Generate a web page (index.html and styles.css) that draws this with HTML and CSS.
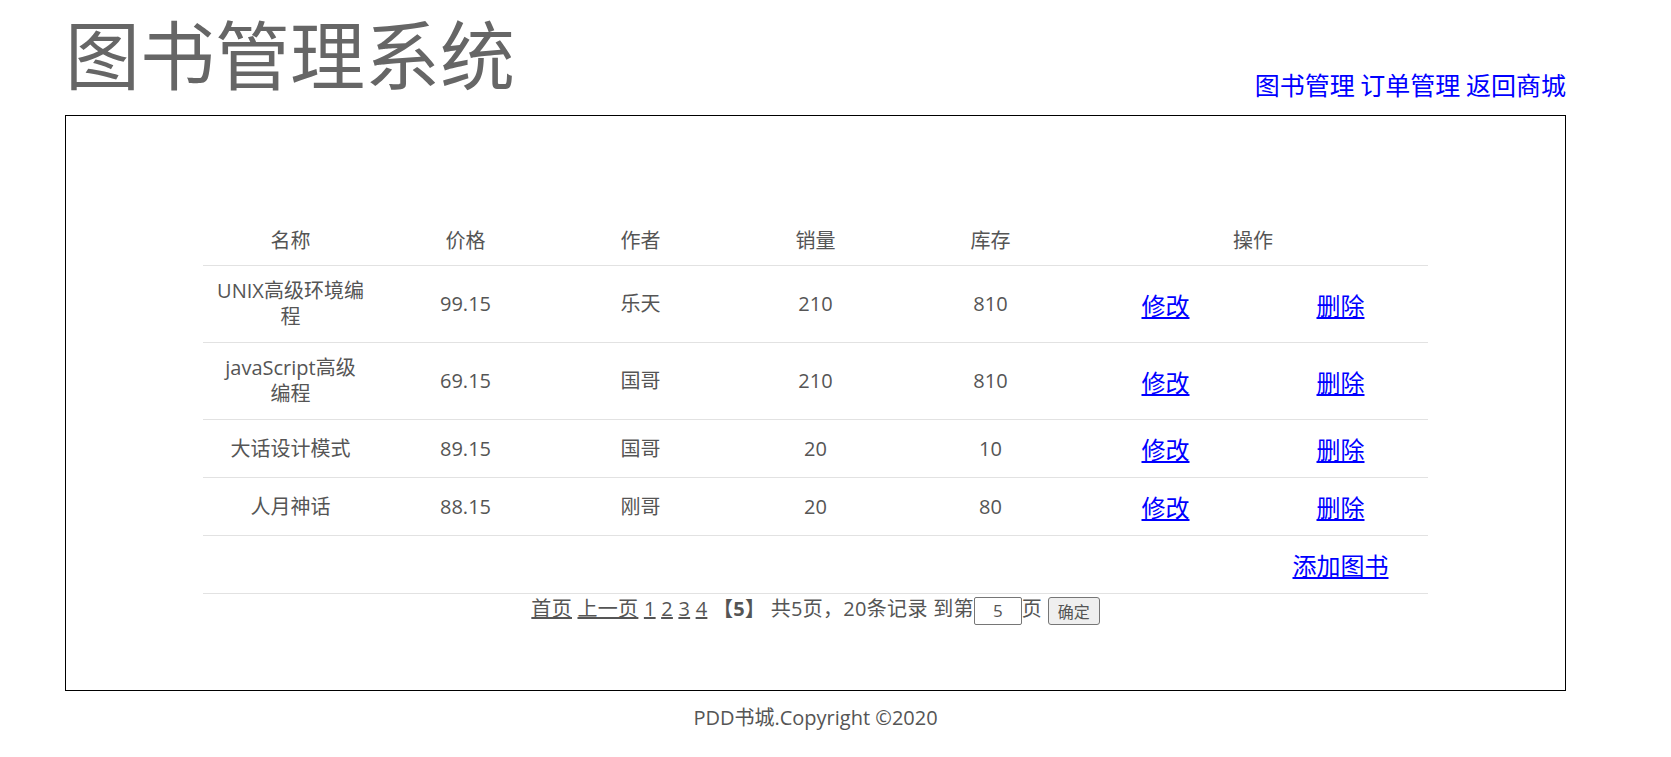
FILE: index.html
```html
<!DOCTYPE html>
<html lang="zh-CN">
<head>
<meta charset="utf-8">
<title>图书管理系统</title>
<link rel="stylesheet" href="styles.css">
</head>
<body>
<div class="page">
  <header class="header">
    <h1 class="title">图书管理系统</h1>
    <nav class="nav"><a href="#">图书管理</a> <a href="#">订单管理</a> <a href="#">返回商城</a></nav>
  </header>
  <main class="box">
    <table class="books">
      <thead>
        <tr><th>名称</th><th>价格</th><th>作者</th><th>销量</th><th>库存</th><th colspan="2">操作</th></tr>
      </thead>
      <tbody>
        <tr><td>UNIX高级环境编程</td><td>99.15</td><td>乐天</td><td>210</td><td>810</td><td class="op"><a href="#">修改</a></td><td class="op"><a href="#">删除</a></td></tr>
        <tr><td>javaScript高级编程</td><td>69.15</td><td>国哥</td><td>210</td><td>810</td><td class="op"><a href="#">修改</a></td><td class="op"><a href="#">删除</a></td></tr>
        <tr><td>大话设计模式</td><td>89.15</td><td>国哥</td><td>20</td><td>10</td><td class="op"><a href="#">修改</a></td><td class="op"><a href="#">删除</a></td></tr>
        <tr><td>人月神话</td><td>88.15</td><td>刚哥</td><td>20</td><td>80</td><td class="op"><a href="#">修改</a></td><td class="op"><a href="#">删除</a></td></tr>
        <tr class="add-row"><td colspan="6"></td><td class="op"><a href="#">添加图书</a></td></tr>
      </tbody>
    </table>
    <div class="pager">
      <a href="#">首页</a> <a href="#">上一页</a> <a href="#">1</a> <a href="#">2</a> <a href="#">3</a> <a href="#">4</a> <b>【5】</b> 共5页，20条记录 到第<input class="page-input" type="text" value="5">页 <button class="go" type="button">确定</button>
    </div>
  </main>
  <footer class="footer">PDD书城.Copyright ©2020</footer>
</div>
</body>
</html>
```
FILE: styles.css
```css
html, body {
  margin: 0;
  padding: 0;
  background: #fff;
}

body {
  font-family: "Open Sans", "Noto Sans CJK SC", sans-serif;
  color: #555;
}

.page {
  width: 1501px;
  margin-left: 65px;
}

.header {
  display: flex;
  justify-content: space-between;
  align-items: flex-end;
  padding-top: 14px;
  margin-bottom: 16px;
}

.title {
  margin: 0 0 10px 0;
  font-family: "Noto Sans CJK SC", sans-serif;
  font-size: 75px;
  line-height: 75px;
  font-weight: normal;
  color: #666;
}

.nav {
  font-family: "Noto Sans CJK SC", sans-serif;
  font-size: 25px;
  line-height: 30px;
}

.nav a {
  color: #00f;
  text-decoration: none;
}

.box {
  border: 1px solid #000;
  padding: 101px 0 65px;
}

.books {
  width: 1225px;
  margin: 0 auto;
  table-layout: fixed;
  border-collapse: collapse;
  font-size: 20px;
  line-height: 26px;
}

.books th {
  font-weight: normal;
  padding: 11px 13px;
  border-bottom: 1px solid #e2e2e2;
  text-align: center;
}

.books td {
  padding: 12px 13px;
  border-bottom: 1px solid #e2e2e2;
  text-align: center;
  vertical-align: middle;
}

.books td.op {
  font-family: "Noto Sans CJK SC", sans-serif;
  font-size: 24px;
  line-height: 33px;
}

.books td.op a {
  color: #00f;
  text-decoration: underline;
}

.pager {
  text-align: center;
  font-size: 20px;
  line-height: 30px;
  letter-spacing: 0.3px;
}

.pager a {
  color: #555;
  text-decoration: underline;
}

.pager b {
  font-weight: bold;
}

.page-input {
  box-sizing: border-box;
  width: 48px;
  height: 28px;
  margin: 0;
  padding: 0;
  border: 1px solid #767676;
  border-radius: 2px;
  font-family: "Open Sans", sans-serif;
  font-size: 17px;
  color: #555;
  text-align: center;
  vertical-align: middle;
}

.go {
  box-sizing: border-box;
  height: 28px;
  margin: 0;
  padding: 0 9px;
  border: 1px solid #767676;
  border-radius: 3px;
  background: #efefef;
  font-family: "Noto Sans CJK SC", sans-serif;
  font-size: 16px;
  letter-spacing: 0;
  color: #555;
  vertical-align: middle;
}

.footer {
  text-align: center;
  font-size: 20px;
  line-height: 26px;
  margin-top: 14px;
}
```
